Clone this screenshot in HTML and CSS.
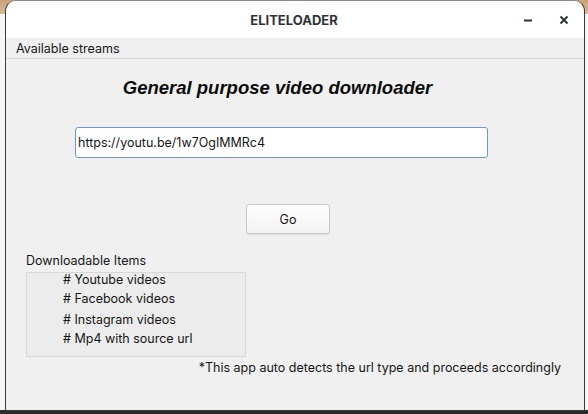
FILE: index.html
```html
<!DOCTYPE html>
<html>
<head>
<meta charset="utf-8">
<link rel="stylesheet" href="styles.css">
</head>
<body>
<div class="desktop">
  <div class="window">
    <div class="titlebar">
      <div class="title">ELITELOADER</div>
      <div class="controls">
        <svg class="ctl" width="12" height="12" viewBox="0 0 12 12"><path d="M2 6.5h8" stroke="#2e3436" stroke-width="2"/></svg>
        <svg class="ctl" width="12" height="12" viewBox="0 0 12 12"><path d="M2.5 2.5l7 7M9.5 2.5l-7 7" stroke="#2e3436" stroke-width="2"/></svg>
      </div>
    </div>
    <div class="menubar"><span class="menu-item">Available streams</span></div>
    <div class="content">
      <h1 class="heading">General purpose video downloader</h1>
      <input class="url" type="text" value="https://youtu.be/1w7OgIMMRc4">
      <button class="go">Go</button>
      <div class="items-label">Downloadable Items</div>
      <div class="items">
        <div class="item i1"># Youtube videos</div>
        <div class="item i2"># Facebook videos</div>
        <div class="item i3"># Instagram videos</div>
        <div class="item i4"># Mp4 with source url</div>
      </div>
      <div class="note">*This app auto detects the url type and proceeds accordingly</div>
    </div>
  </div>
</div>
</body>
</html>
```
FILE: styles.css
```css
html, body {
  margin: 0;
  padding: 0;
}
body {
  width: 588px;
  height: 414px;
  overflow: hidden;
  font-family: Inter, "Noto Sans", sans-serif;
  font-size: 12.5px;
  color: #161616;
}
.desktop {
  width: 588px;
  height: 414px;
  box-sizing: border-box;
  padding: 0 3px 3px 5px;
  background: linear-gradient(to bottom, #c9a37a 0, #d8b892 14px, #f6f6f6 14px, #f6f6f6 410px, #2c2a28 410px);
  display: flex;
}
.window {
  flex: 1;
  display: flex;
  flex-direction: column;
  border: 1px solid #3a3a3a;
  border-top-color: #8a8a8a;
  border-radius: 11px 11px 0 0;
  overflow: hidden;
  background: #f0f0f0;
}
.titlebar {
  height: 37px;
  flex: none;
  background: #ffffff;
  display: flex;
  align-items: center;
  position: relative;
}
.title {
  flex: 1;
  text-align: center;
  font-weight: 700;
  font-size: 13px;
  color: #2e3436;
  padding-right: 2px;
}
.controls {
  position: absolute;
  right: 14px;
  top: 13px;
  display: flex;
  gap: 24px;
}
.ctl {
  display: block;
}
.menubar {
  height: 20px;
  flex: none;
  background: #efefef;
  border-bottom: 1px solid #d6d6d6;
  display: flex;
  align-items: center;
  padding-left: 10px;
}
.menu-item {
  font-size: 12.5px;
}
.content {
  flex: 1;
  display: flex;
  flex-direction: column;
  align-items: flex-start;
  background: #f0f0f0;
}
.heading {
  margin: 18px 0 0 0;
  align-self: stretch;
  text-align: center;
  padding-right: 35px;
  font-family: "Liberation Sans", Arial, sans-serif;
  font-style: italic;
  font-weight: 700;
  font-size: 18.5px;
  line-height: 22px;
  color: #0c0c0c;
}
.url {
  margin: 28px 0 0 69px;
  width: 413px;
  height: 31px;
  box-sizing: border-box;
  border: 1px solid #6f97c2;
  border-radius: 3px;
  background: #ffffff;
  padding: 0 2px;
  font-family: Inter, "Noto Sans", sans-serif;
  font-size: 12.5px;
  color: #161616;
  outline: none;
}
.go {
  margin: 46px 0 0 240px;
  width: 84px;
  height: 30px;
  box-sizing: border-box;
  border: 1px solid #c9c9c9;
  border-radius: 3px;
  background: linear-gradient(#fdfdfd, #f3f3f3);
  box-shadow: 0 1px 1px rgba(0,0,0,0.08);
  font-family: Inter, "Noto Sans", sans-serif;
  font-size: 12.5px;
  color: #161616;
  padding: 0;
}
.items-label {
  margin: 19px 0 0 20px;
  line-height: 16px;
}
.items {
  margin: 3px 0 0 20px;
  width: 220px;
  height: 85px;
  box-sizing: border-box;
  border: 1px solid #d8d8d8;
  background: #ececec;
  padding: 0 0 0 36px;
  display: flex;
  flex-direction: column;
}
.item {
  line-height: 16px;
}
.i1 { margin-top: -1px; }
.i2 { margin-top: 3px; }
.i3 { margin-top: 5px; }
.i4 { margin-top: 3px; }
.note {
  margin: 3px 0 0 0;
  align-self: flex-end;
  padding-right: 23px;
  line-height: 16px;
}
```
